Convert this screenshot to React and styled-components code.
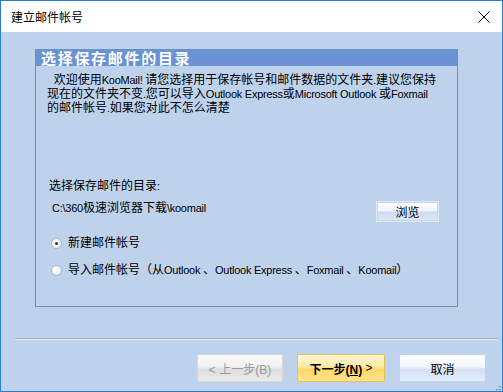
import React from "react";
import styled, { createGlobalStyle } from "styled-components";

const Global = createGlobalStyle`
  html, body { margin: 0; padding: 0; background: #ffffff; }
  body { font-family: "Liberation Sans", "Noto Sans CJK SC", sans-serif; }
`;

const Window = styled.div`
  width: 503px;
  height: 392px;
  box-sizing: border-box;
  border: 1px solid #2a7bd3;
  display: flex;
  flex-direction: column;
  background: #bfd2ec;
  position: relative;
  overflow: hidden;
`;

const TitleBar = styled.div`
  height: 31px;
  background: #ffffff;
  display: flex;
  align-items: center;
  justify-content: space-between;
  padding: 0 10px 0 10px;
  flex: none;
`;

const TitleText = styled.div`
  font-family: "Noto Sans CJK SC", sans-serif;
  font-size: 12px;
  color: #000;
  margin-top: -1px;
`;

const CloseBtn = styled.div`
  width: 14px;
  height: 14px;
  display: flex;
  align-items: center;
  justify-content: center;
  margin-right: 1px;
`;

const Body = styled.div`
  flex: 1;
  display: flex;
  flex-direction: column;
  padding: 17px 0 0 34px;
`;

const Panel = styled.div`
  width: 423px;
  height: 258px;
  box-sizing: border-box;
  border: 1px solid #6d8fc4;
  display: flex;
  flex-direction: column;
`;

const PanelHeader = styled.div`
  height: 16px;
  background: #6993d4;
  color: #ffffff;
  font-family: "Noto Sans CJK SC", sans-serif;
  font-weight: bold;
  font-size: 15px;
  letter-spacing: 1.7px;
  line-height: 16px;
  padding-left: 5px;
  white-space: nowrap;
  flex: none;
`;

const Lat = styled.span`
  font-family: "Liberation Sans", sans-serif;
  font-size: 11px;
  letter-spacing: -0.25px;
`;

const Intro = styled.div`
  margin: 7px 0 0 11px;
  font-size: 12px;
  line-height: 14px;
  color: #000;
  white-space: nowrap;
`;

const FieldLabel = styled.div`
  margin: 64px 0 0 13px;
  font-size: 12px;
  line-height: 14px;
  color: #000;
`;

const PathRow = styled.div`
  margin: 8px 0 0 16px;
  padding-right: 19px;
  display: flex;
  align-items: flex-start;
  justify-content: space-between;
`;

const PathText = styled.div`
  font-size: 12px;
  line-height: 14px;
  color: #000;
`;

const SmallButton = styled.div`
  width: 61px;
  height: 19px;
  box-sizing: border-box;
  margin-top: 1px;
  border: 1px solid #c8d6ea;
  background: linear-gradient(#fdfeff 0%, #eef4fc 45%, #cddcf2 55%, #dde8f8 100%);
  font-family: "Noto Sans CJK SC", sans-serif;
  font-size: 12px;
  line-height: 17px;
  text-align: center;
  color: #000;
  box-shadow: 0 0 0 1px rgba(255,255,255,0.5);
`;

const RadioList = styled.div`
  margin: 15px 0 0 15px;
  display: flex;
  flex-direction: column;
  gap: 13px;
`;

const RadioRow = styled.div`
  display: flex;
  align-items: center;
  gap: 6px;
  font-size: 12px;
  line-height: 14px;
  color: #000;
  white-space: nowrap;
`;

const RadioDot = styled.span`
  width: 11px;
  height: 11px;
  box-sizing: border-box;
  border-radius: 50%;
  border: 1px solid #a9b8cc;
  background: radial-gradient(circle at 40% 35%, #ffffff 0%, #eef2f7 60%, #d3dbe6 100%);
  display: flex;
  align-items: center;
  justify-content: center;
  &::after {
    content: "";
    display: ${p => (p.$checked ? "block" : "none")};
    width: 3px;
    height: 3px;
    border-radius: 50%;
    background: #333;
  }
`;

const Separator = styled.div`
  margin: 31px 4px 0 -20px;
  height: 1px;
  background: #a3acb8;
  border-bottom: 1px solid #e7eef8;
`;

const ButtonRow = styled.div`
  margin-top: 14px;
  padding-right: 16px;
  display: flex;
  justify-content: flex-end;
  gap: 14px;
`;

const Btn = styled.div`
  width: ${p => p.$w}px;
  height: 28px;
  box-sizing: border-box;
  border-radius: 2px;
  display: flex;
  align-items: center;
  justify-content: center;
  font-size: 12px;
  font-family: "Liberation Sans", "Noto Sans CJK SC", sans-serif;
  ${p =>
    p.$variant === "primary"
      ? `border: 1px solid #e3c15e;
         background: linear-gradient(#fff6d2 0%, #ffeaa4 45%, #fdd769 55%, #fde38c 100%);
         color: #000;`
      : p.$variant === "disabled"
      ? `border: 1px solid #d5d7da;
         background: linear-gradient(#fbfbfb 0%, #f0f0f0 45%, #dedede 55%, #e9e9e9 100%);
         color: #9a9a9a;`
      : `border: 1px solid #c5d3e7;
         background: linear-gradient(#ffffff 0%, #f1f6fd 45%, #d2e1f6 55%, #e2ecfa 100%);
         color: #000;`}
`;

const Grip = styled.div`
  position: absolute;
  right: 1px;
  bottom: 1px;
  width: 10px;
  height: 10px;
`;

export default function App() {
  return (
    <>
      <Global />
      <Window>
        <TitleBar>
          <TitleText>建立邮件帐号</TitleText>
          <CloseBtn>
            <svg width="12" height="12" viewBox="0 0 12 12">
              <path d="M0.5 0.5 L11.5 11.5 M11.5 0.5 L0.5 11.5" stroke="#111" strokeWidth="1" />
            </svg>
          </CloseBtn>
        </TitleBar>
        <Body>
          <Panel>
            <PanelHeader>选择保存邮件的目录</PanelHeader>
            <Intro>
              &nbsp;&nbsp;欢迎使用<Lat>KooMail! </Lat>请您选择用于保存帐号和邮件数据的文件夹<Lat>.</Lat>建议您保持
              <br />
              现在的文件夹不变<Lat>.</Lat>您可以导入<Lat>Outlook Express</Lat>或<Lat>Microsoft Outlook </Lat>或<Lat>Foxmail</Lat>
              <br />
              的邮件帐号<Lat>.</Lat>如果您对此不怎么清楚
            </Intro>
            <FieldLabel>选择保存邮件的目录<Lat>:</Lat></FieldLabel>
            <PathRow>
              <PathText><Lat>C:\360</Lat>极速浏览器下载<Lat>\koomail</Lat></PathText>
              <SmallButton>浏览</SmallButton>
            </PathRow>
            <RadioList>
              <RadioRow>
                <RadioDot $checked />
                新建邮件帐号
              </RadioRow>
              <RadioRow>
                <RadioDot />
                <span>
                  导入邮件帐号（从<Lat>Outlook </Lat>、<Lat>Outlook Express </Lat>、<Lat>Foxmail </Lat>、<Lat>Koomail</Lat>）
                </span>
              </RadioRow>
            </RadioList>
          </Panel>
          <Separator />
          <ButtonRow>
            <Btn $w={86} $variant="disabled">&lt; 上一步(B)</Btn>
            <Btn $w={88} $variant="primary">
              <b>下一步(<u>N</u>)</b>&nbsp;&gt;
            </Btn>
            <Btn $w={87}>取消</Btn>
          </ButtonRow>
        </Body>
        <Grip>
          <svg width="10" height="10" viewBox="0 0 10 10">
            {[[8, 2], [5, 5], [8, 5], [2, 8], [5, 8], [8, 8]].map(([x, y], i) => (
              <rect key={i} x={x} y={y} width="1.5" height="1.5" fill="#7d8da3" />
            ))}
          </svg>
        </Grip>
      </Window>
    </>
  );
}
